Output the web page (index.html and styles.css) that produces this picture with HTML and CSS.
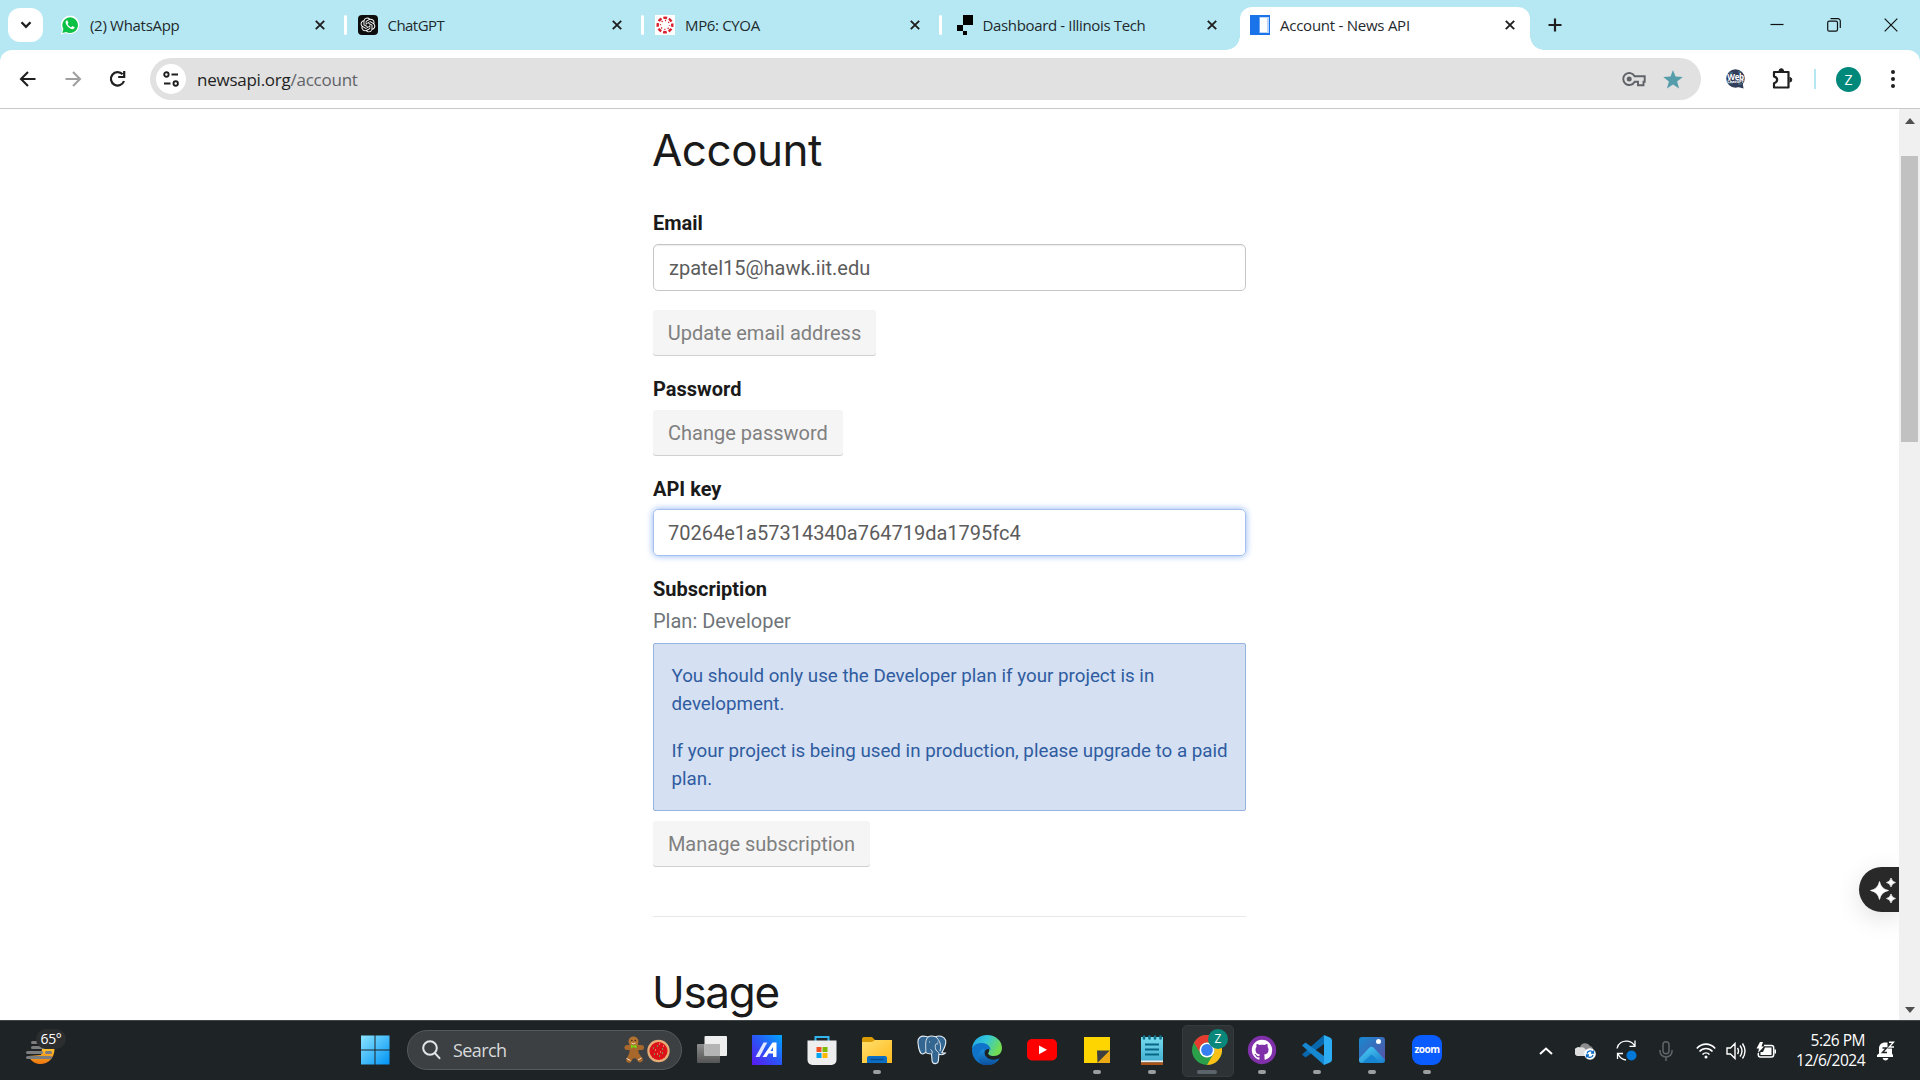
FILE: index.html
```
<!DOCTYPE html>
<html lang="en">
<head>
<meta charset="utf-8">
<title>Account - News API</title>
<link rel="stylesheet" href="styles.css">
</head>
<body>
<div class="screen">
  <header class="tabstrip">
    <button class="tab-search" aria-label="Search tabs"><svg width="12" height="8" viewBox="0 0 12 8"><path d="M1.5 1.2 6 5.8l4.5-4.6" fill="none" stroke="#1f1f1f" stroke-width="2.3"/></svg></button>
    <div class="tabs">
      <div class="tab">
        <svg class="fav" viewBox="0 0 20 20"><path d="M.8 19.4 2.2 14.6A9.2 9.2 0 1 1 5.8 18Z" fill="#fff"/><path d="m2.3 17.9 1.1-3.8a7.8 7.8 0 1 1 2.8 2.8Z" fill="#0cc143"/><path d="M7.2 5.3c-.5-.1-1.7.7-1.6 2.200.2 2.400 3.600 6.400 6.800 6.700 1.500 0 2.300-1 2.200-1.900l-2.300-1.200-1.100 1.200C9.500 11.700 8.200 10.300 7.600 9l.8-1.200Z" fill="#fff"/></svg>
        <span class="tab-title t1">(2) WhatsApp</span><svg class="x" viewBox="0 0 10 10"><path d="m.8.8 8.400 8.400M9.200.8.8 9.200"/></svg>
      </div>
      <div class="tab">
        <svg class="fav" viewBox="0 0 20 20"><rect width="20" height="20" rx="4" fill="#0d0d0d"/><g transform="translate(2.600 2.600) scale(.615)"><path fill="#fff" d="M22.2819 9.8211a5.9847 5.9847 0 0 0-.5157-4.9108 6.0462 6.0462 0 0 0-6.5098-2.9A6.0651 6.0651 0 0 0 4.9807 4.1818a5.9847 5.9847 0 0 0-3.9977 2.9 6.0462 6.0462 0 0 0 .7427 7.0966 5.98 5.98 0 0 0 .511 4.9107 6.051 6.051 0 0 0 6.5146 2.9001A5.9847 5.9847 0 0 0 13.2599 24a6.0557 6.0557 0 0 0 5.7718-4.2058 5.9894 5.9894 0 0 0 3.9977-2.9001 6.0557 6.0557 0 0 0-.7475-7.0729zm-9.022 12.6081a4.4755 4.4755 0 0 1-2.8764-1.0408l.1419-.0804 4.7783-2.7582a.7948.7948 0 0 0 .3927-.6813v-6.7369l2.02 1.1686a.071.071 0 0 1 .038.052v5.5826a4.504 4.504 0 0 1-4.4945 4.4944zm-9.6607-4.1254a4.4708 4.4708 0 0 1-.5346-3.0137l.142.0852 4.783 2.7582a.7712.7712 0 0 0 .7806 0l5.8428-3.3685v2.3324a.0804.0804 0 0 1-.0332.0615L9.74 19.9502a4.4992 4.4992 0 0 1-6.1408-1.6464zM2.3408 7.8956a4.485 4.485 0 0 1 2.3655-1.9728V11.6a.7664.7664 0 0 0 .3879.6765l5.8144 3.3543-2.0201 1.1685a.0757.0757 0 0 1-.071 0l-4.8303-2.7865A4.504 4.504 0 0 1 2.3408 7.872zm16.5963 3.8558L13.1038 8.364 15.1192 7.2a.0757.0757 0 0 1 .071 0l4.8303 2.7913a4.4944 4.4944 0 0 1-.6765 8.1042v-5.6772a.79.79 0 0 0-.407-.667zm2.0107-3.0231l-.142-.0852-4.7735-2.7818a.7759.7759 0 0 0-.7854 0L9.409 9.2297V6.8974a.0662.0662 0 0 1 .0284-.0615l4.8303-2.7866a4.4992 4.4992 0 0 1 6.6802 4.66zM8.3065 12.863l-2.02-1.1638a.0804.0804 0 0 1-.038-.0567V6.0742a4.4992 4.4992 0 0 1 7.3757-3.4537l-.142.0805L8.704 5.459a.7948.7948 0 0 0-.3927.6813zm1.0976-2.3654l2.602-1.4998 2.6069 1.4998v2.9994l-2.5974 1.4997-2.6067-1.4997Z"/></g></svg>
        <span class="tab-title t2">ChatGPT</span><svg class="x" viewBox="0 0 10 10"><path d="m.8.8 8.400 8.400M9.200.8.8 9.200"/></svg>
      </div>
      <div class="tab">
        <svg class="fav" viewBox="0 0 20 20"><rect width="20" height="20" fill="#fff"/><circle cx="10" cy="10" r="7.300" fill="none" stroke="#d92231" stroke-width="2.500" stroke-dasharray="3.800 1.933" stroke-dashoffset="1.900"/><circle cx="10" cy="10" r="4.500" fill="none" stroke="#d92231" stroke-width="1.300" stroke-dasharray="1.200 2.334" stroke-dashoffset=".6"/></svg>
        <span class="tab-title t3">MP6: CYOA</span><svg class="x" viewBox="0 0 10 10"><path d="m.8.8 8.400 8.400M9.200.8.8 9.200"/></svg>
      </div>
      <div class="tab last">
        <svg class="fav" viewBox="0 0 20 20"><path d="M10 0h10v10H10zM4 10h6v6H4zM10 16h4v4h-4z"/></svg>
        <span class="tab-title t4">Dashboard - Illinois Tech</span><svg class="x" viewBox="0 0 10 10"><path d="m.8.8 8.400 8.400M9.200.8.8 9.200"/></svg>
      </div>
      <div class="tab active">
        <svg class="fav" viewBox="0 0 20 20"><path d="M0 0h20v20H0z" fill="#1a73e8"/><path d="M9.500 2H19v16H9.500z" fill="#bcd6fa"/><path d="M10 3h7v14h-7z" fill="#fff"/></svg>
        <span class="tab-title t5">Account - News API</span><svg class="x" viewBox="0 0 10 10"><path d="m.8.8 8.400 8.400M9.200.8.8 9.200"/></svg>
      </div>
    </div>
    <svg class="newtab" width="14" height="14" viewBox="0 0 14 14"><path d="M7 .5v13M.5 7h13" stroke="#1f1f1f" stroke-width="2.200"/></svg>
    <div class="winctl">
      <svg width="14" height="14" viewBox="0 0 14 14"><path d="M.5 6.500h13" /></svg>
      <svg width="14" height="14" viewBox="0 0 14 14"><rect x=".7" y="3.200" width="9.800" height="10" rx="1.600"/><path d="M3.500.7H10.800a2.500 2.500 0 0 1 2.500 2.500V10"/></svg>
      <svg width="14" height="14" viewBox="0 0 14 14"><path d="m.7.7 12.600 12.600M13.300.7.7 13.300"/></svg>
    </div>
  </header>

  <nav class="toolbar">
    <svg class="nav" viewBox="0 0 18 18"><path d="M16.500 9H2M9 2 2 9l7 7" fill="none" stroke="#1f1f1f" stroke-width="2.100"/></svg>
    <svg class="nav" viewBox="0 0 18 18"><path d="M1.500 9H16M9 2l7 7-7 7" fill="none" stroke="#a0a0a0" stroke-width="2.100"/></svg>
    <svg class="nav" viewBox="0 0 18 18"><path d="M13.600 4.300A6.700 6.700 0 1 0 15 11M15.200 1v6h-6" fill="none" stroke="#1f1f1f" stroke-width="2.200"/></svg>
    <div class="omnibox">
      <span class="site"><svg width="16" height="16" viewBox="0 0 16 16" fill="none" stroke="#1f1f1f" stroke-width="1.900"><circle cx="3.400" cy="3.500" r="2.200"/><path d="M8.500 3.500H15M1 12.500h6.500"/><circle cx="12.700" cy="12.500" r="2.200"/></svg></span>
      <span class="url"><b>newsapi.org</b>/account</span>
      <svg class="key" width="24" height="16" viewBox="0 0 24 16"><path d="M12.600 5.300A6 6 0 1 0 12.600 10.700H16V14.200H21.500V10.700H22.700V5.300Z" fill="none" stroke="#5f6368" stroke-width="1.900"/><circle cx="7.200" cy="8" r="2.500" fill="#5f6368"/></svg>
      <svg class="star" width="20" height="19" viewBox="0 0 20 19"><path d="m10 0 2.500 6.600 7.300.4-5.700 4.500 2 7L10 14.600l-6.100 3.900 2-7L.2 7l7.300-.4Z" fill="#569dac"/></svg>
    </div>
    <span class="ext"><svg width="19" height="20" viewBox="0 0 19 20"><circle cx="9.500" cy="9.500" r="9.300" fill="#323d59"/><path d="m12 18 5.500 1.500-.7-5Z" fill="#323d59"/><path d="M3 4h4M12 3h3M2 14h5M12 15h4" stroke="#4b8396"/></svg><i>Web</i><u>ChatGPT</u></span>
    <svg class="puzzle" width="22" height="22" viewBox="0 0 22 22"><path d="M3 4H17.500V19.500H3V15.200C7.200 14 7.200 9.600 3 8.400Z" fill="none" stroke="#1f1f1f" stroke-width="2.200" stroke-linejoin="round"/><path d="M8 3a2.300 2.300 0 0 1 4.600 0M18.500 9.500a2.300 2.300 0 0 1 0 4.600" fill="#1f1f1f" stroke="#1f1f1f"/></svg>
    <span class="divider"></span>
    <span class="avatar">Z</span>
    <svg class="dots" width="4" height="18" viewBox="0 0 4 18" fill="#1f1f1f"><circle cx="2" cy="2" r="2"/><circle cx="2" cy="9" r="2"/><circle cx="2" cy="16" r="2"/></svg>
  </nav>

  <div class="viewport">
    <main class="page">
      <h1 class="h-account">Account</h1>
      <form class="form">
        <label class="label">Email</label>
        <div class="input">zpatel15@hawk.iit.edu</div>
        <button type="button" class="btn b1">Update email address</button>
        <label class="label l2">Password</label>
        <button type="button" class="btn b2">Change password</button>
        <label class="label l3">API key</label>
        <div class="input focus">70264e1a57314340a764719da1795fc4</div>
        <label class="label l3">Subscription</label>
        <p class="plan">Plan: Developer</p>
        <div class="alert">
          <p>You should only use the Developer plan if your project is in development.</p>
          <p>If your project is being used in production, please upgrade to a paid plan.</p>
        </div>
        <button type="button" class="btn b3">Manage subscription</button>
      </form>
      <hr>
      <h1 class="h-usage">Usage</h1>
    </main>
    <div class="scrollbar">
      <svg width="10" height="6" viewBox="0 0 10 6"><path d="M0 6 5 0l5 6Z" fill="#505050"/></svg>
      <span class="thumb"></span>
      <svg width="10" height="6" viewBox="0 0 10 6"><path d="m0 0 5 6 5-6Z" fill="#505050"/></svg>
    </div>
    <div class="assist"><svg width="26" height="26" viewBox="0 0 26 26" fill="#fff"><path d="M9.500 4.500Q11 12 18.500 13.500 11 15 9.500 22.500 8 15 .5 13.500 8 12 9.500 4.500ZM21 1q.8 3.700 4.500 4.500Q21.800 6.300 21 10q-.8-3.700-4.500-4.500Q20.200 4.700 21 1ZM21 17q.8 3.700 4.500 4.500-3.700.8-4.500 4.500-.8-3.700-4.500-4.500 3.700-.8 4.500-4.500Z" stroke="#fff" stroke-width=".7"/></svg></div>
  </div>

  <footer class="taskbar">
    <div class="weather">
      <svg width="30" height="27" viewBox="0 0 30 27"><defs><linearGradient id="sun" x2="0" y2="1"><stop stop-color="#fdc02e"/><stop offset="1" stop-color="#f0760f"/></linearGradient></defs><path d="M2.500 18C5 23.500 9.500 26 14.500 26 22 26 28.500 20 28.500 11H16l-1 6Z" fill="url(#sun)"/><path d="M6.500 4.500h4M6.500 9.500h11M1.500 14.500h14M20.500 14.500h4M1.500 19.500h23" stroke="#7c7d7e" stroke-width="3" stroke-linecap="round"/></svg>
      <span>65°</span>
    </div>
    <div class="start"><svg width="30" height="30" viewBox="0 0 30 30"><defs><linearGradient id="win" x2="1" y2="1"><stop stop-color="#8be4ff"/><stop offset="1" stop-color="#0093f5"/></linearGradient></defs><path d="M1 .5h13.500v14H1zM15.500.5H29.500v14H15.500zM1 15.500h13.500v14H1zM15.500 15.500H29.500v14H15.500z" fill="url(#win)"/></svg></div>
    <div class="search">
      <svg width="19" height="20" viewBox="0 0 19 20" fill="none" stroke="#e4e5e6" stroke-width="2"><circle cx="8" cy="8" r="6.800"/><path d="m12.800 13 4.700 5.200" stroke-linecap="round"/></svg>
      <span>Search</span>
      <svg class="treat" width="47" height="28" viewBox="0 0 47 28"><g stroke="#a8682c" stroke-linecap="round"><path d="M10 10v8" stroke-width="9"/><path d="M3 11.500h14.500" stroke-width="5"/><path d="m8 18-3 6M12 18l4 5.500" stroke-width="5.500"/></g><circle cx="9.500" cy="5.500" r="5" fill="#b3722f"/><path d="M7.500 7q2 1.500 4 0M2.500 22.500l4 2M14 24l3.500-2" stroke="#f2dfc5" fill="none"/><path d="m7 8.500 2.500 1.400L12.500 8.500v4L9.500 11 7 12.500Z" fill="#73d813"/><path d="M7.800 4.500h.1M11.200 4.500h.1" stroke="#402612" stroke-width="1.400" stroke-linecap="round"/><circle cx="34.500" cy="15" r="11.200" fill="#e7ac78"/><circle cx="34.500" cy="15" r="9" fill="#dd1118"/><path d="M29 12h1M33 10h1M38 13h1M30 18h1M35 20h1M38 17h1" stroke="#62b45a" stroke-width="1.500"/><path d="M35 8h1M31 14h1M36 16h1M33 18h1M39 10h1" stroke="#ffd2b0"/></svg>
    </div>
    <div class="apps">
      <div class="app"><svg viewBox="0 0 30 30"><defs><linearGradient id="tv" x2="0" y2="1"><stop stop-color="#8d8d8d"/><stop offset="1" stop-color="#555"/></linearGradient></defs><rect y="9" width="23" height="19" rx="1" fill="url(#tv)"/><rect x="7.500" y="1" width="22.500" height="20" rx="1" fill="#eee"/><path d="M7.500 9H23v12H7.500z" fill="#b4b4b4"/></svg></div>
      <div class="app"><svg viewBox="0 0 30 30"><defs><linearGradient id="aa" x1="1" x2="0" y2="1"><stop stop-color="#00a6ff"/><stop offset=".5" stop-color="#2b55f5"/><stop offset="1" stop-color="#5a18f0"/></linearGradient></defs><path d="M0 0h30v30H0z" fill="url(#aa)"/><path d="M11.500 7.500h3.800L7.500 22H3.500Z" fill="#dfe6ff"/><path d="M20.500 7.500H24.500V22H21V18.500H16.500L14.500 22H10.500ZM21 12l-2.500 4H21Z" fill="#fff" fill-rule="evenodd"/></svg></div>
      <div class="app"><svg viewBox="0 0 30 30"><path d="M8.500 7V2h13v5" fill="none" stroke="#33b5ef" stroke-width="2"/><path d="M.5 5.500h29V25a5 5 0 0 1-5 5h-19a5 5 0 0 1-5-5Z" fill="#eee"/><path fill="#f25022" d="M9.500 12h5v5h-5z"/><path fill="#7fba00" d="M15.500 12h5v5h-5z"/><path fill="#00a4ef" d="M9.500 18h5v5h-5z"/><path fill="#ffb900" d="M15.500 18h5v5h-5z"/></svg></div>
      <div class="app run"><svg viewBox="0 0 30 30"><defs><linearGradient id="fo" x2="1" y2="1"><stop stop-color="#ffe06e"/><stop offset="1" stop-color="#ffb91c"/></linearGradient></defs><path d="M0 4q0-2 2-2h8l3 3v5H0Z" fill="#d99b05"/><path d="M0 7h10l3-2h17v23H0Z" fill="url(#fo)"/><path d="M5 28v-5q0-2 2-2h16q2 0 2 2v5Z" fill="#0a6fc4"/><path d="M8.500 24.500h13" stroke="#084c8d" stroke-width="1.500"/></svg></div>
      <div class="app"><svg viewBox="0 0 30 30"><path d="M9 1.500C4 .2.400 2.500 1 8c.4 4.500 2 11 4.500 11 1.500 0 2-1.300 3.500-1.500 1 1.500 3.500 1 5.500 1.500l.6 7c.3 3.500 6 3.600 6.300-.5l.5-6.200c2.800.8 5.500-.2 6.500-1.200-1.500-.2-3-.1-3.600-.6C27.500 13 29.500 8 28.500 5 27 1.300 22 0 18.500 1.700 15.500.7 13 .7 11 2Z" fill="#336791" stroke="#e5edf3" stroke-width="1.100"/><path d="M11 2C7.500 6 9 11 8.800 17.500M18.500 1.700c4.500 3.300 6 9 4.500 14.500M21 9c-3.500-1.500-3 4-2 6 .8 1.500 2.800 2 3 3.500M15 18.500c.5-2 0-3-1.500-4M12 7h1M20.500 7h1" fill="none" stroke="#e5edf3" stroke-width=".9"/></svg></div>
      <div class="app"><svg viewBox="0 0 30 30"><defs><linearGradient id="eg" x2="1" y2=".4"><stop stop-color="#1d9fe5"/><stop offset=".5" stop-color="#33c8d8"/><stop offset="1" stop-color="#72dc52"/></linearGradient><linearGradient id="eb" x2="0" y2="1"><stop stop-color="#1c90dd"/><stop offset="1" stop-color="#0b4f9e"/></linearGradient></defs><path d="M0 14C.5 5.500 7 0 15 0c9 0 15 6 15 13 0 5-3.500 8-8 8-4 0-6.500-1.500-5.500-3.500C19 14 16 10.500 11 10.500 6 8.500 1.500 11 0 14Z" fill="url(#eg)"/><path d="M0 14C1.500 9.500 6 7.500 10.500 8c4.500.4 8 3 8 7C16 13 12.500 14.500 12.500 18.500c0 5 6.500 9 15 5C24.500 28 20.500 30 15 30 6 30-.5 23 0 14Z" fill="#0f73c9"/><path d="M10.500 29.500C4 26 4.500 16.500 12.500 14c-2 7 4.500 13.500 15 9.500C23.500 29.500 17 31 10.500 29.500Z" fill="url(#eb)"/></svg></div>
      <div class="app"><svg viewBox="0 0 30 30"><rect y="4" width="30" height="21.500" rx="5" fill="#f00"/><path d="m12 10.500 8 4.300-8 4.400Z" fill="#fff"/></svg></div>
      <div class="app run"><svg viewBox="0 0 30 30"><path d="M2 2h26v26H2z" fill="#fed500"/><path d="M15 15.500h13L15.500 28Z" fill="#3f3f3f"/><path d="M28 15.500V28H15.500Z" fill="#eba915"/></svg></div>
      <div class="app run"><svg viewBox="0 0 30 30"><defs><linearGradient id="np" x2="0" y2="1"><stop stop-color="#76dbee"/><stop offset="1" stop-color="#42aed0"/></linearGradient></defs><path d="M4 2h22v25H4z" fill="url(#np)"/><path d="M4 25.500h22v2H4z" fill="#eee"/><path d="M4 27.500h22V30H4z" fill="#aa5517"/><path d="M8 9.500h14M8 14.500h14M8 19.500h14" stroke="#0a6685" stroke-width="2"/><path d="M7 1.500v2M12.500 1.500v2M18 1.500v2M23.500 1.500v2" stroke="#13718c" stroke-width="2.600" stroke-linecap="round"/></svg></div>
      <div class="app current run"><svg viewBox="0 0 30 30"><circle cx="15" cy="15" r="15" fill="#2aa04b"/><path d="M2 7.500A15 15 0 0 1 28 7.500H15A7.500 7.500 0 0 0 8.500 18.700Z" fill="#e63b2e"/><path d="M28 7.500A15 15 0 0 1 15 30l6.500-11.300A7.500 7.500 0 0 0 15 7.500Z" fill="#fbc116"/><circle cx="15" cy="15" r="7.500" fill="#fff"/><circle cx="15" cy="15" r="5.900" fill="#357ff0"/></svg><span class="badge">Z</span></div>
      <div class="app run"><svg viewBox="0 0 30 30"><circle cx="15" cy="15" r="14.200" fill="#8030a8"/><path transform="translate(4.800 4.800) scale(1.275)" fill="#fff" d="M8 0C3.580 0 0 3.580 0 8c0 3.540 2.290 6.530 5.470 7.590.4.07.55-.17.55-.38 0-.19-.01-.82-.01-1.490-2.010.37-2.530-.49-2.690-.94-.09-.23-.48-.94-.82-1.130-.28-.15-.68-.52-.01-.53.63-.01 1.080.58 1.230.82.72 1.210 1.870.87 2.330.66.07-.52.28-.87.51-1.070-1.780-.2-3.640-.89-3.640-3.950 0-.87.31-1.590.82-2.150-.08-.2-.36-1.020.08-2.120 0 0 .67-.21 2.200.82.64-.18 1.320-.27 2-.27.68 0 1.360.09 2 .27 1.530-1.040 2.200-.82 2.200-.82.44 1.100.16 1.920.08 2.120.51.56.82 1.270.82 2.150 0 3.070-1.870 3.750-3.650 3.950.29.25.54.73.54 1.480 0 1.070-.01 1.930-.01 2.200 0 .21.15.46.55.38A8.010 8.010 0 0 0 16 8c0-4.420-3.580-8-8-8z"/></svg></div>
      <div class="app run"><svg viewBox="0 0 30 30"><path d="M22 0v9L3.500 22.500 0 19.500Z" fill="#0868ae"/><path d="M0 10.500 3.500 7.500 22 21v9L0 10.500Z" fill="#1687d0"/><path d="m22 0 6 2.500q2 1 2 3v19q0 2-2 3L22 30Z" fill="#2bacf3"/></svg></div>
      <div class="app run"><svg viewBox="0 0 30 30"><defs><linearGradient id="ph" x2="1" y2="1"><stop stop-color="#1889d0"/><stop offset="1" stop-color="#5c4ea5"/></linearGradient><linearGradient id="mt" x2="1" y2="1"><stop stop-color="#50d5f8"/><stop offset="1" stop-color="#1374c9"/></linearGradient><clipPath id="phc"><rect x="2" y="2" width="26" height="26" rx="3"/></clipPath></defs><g clip-path="url(#phc)"><path d="M2 2h26v26H2z" fill="url(#ph)"/><path d="m0 26 12-13q2.500-2.500 5 0l13 14v3H0Z" fill="url(#mt)"/><path d="m5 28 9.500-8.500L24 28Z" fill="#1685d2"/></g><circle cx="21.500" cy="6.500" r="2.500" fill="#fff"/></svg></div>
      <div class="app run zoomapp"><span>zoom</span></div>
    </div>
    <div class="tray">
      <svg class="c1" width="14" height="8" viewBox="0 0 14 8"><path d="m1 7 6-5.500L13 7" fill="none" stroke="#fff" stroke-width="2"/></svg>
      <svg class="c2" width="21" height="18" viewBox="0 0 21 18"><path d="M5 5a5.500 5.500 0 0 1 10-1 4.500 4.500 0 0 1 3 6H5Z" fill="#8c8c8c"/><path d="M4.500 14a4.500 4.500 0 1 1 1-8.500c2-.8 4.500.2 5.500 3l2 5.500Z" fill="#dedede"/><circle cx="15" cy="12" r="5.800" fill="#fff"/><path d="M12 11.500a3.200 3.200 0 0 1 6-.8M18 12.800a3.200 3.200 0 0 1-6 .8M18.500 8.500v2.500H16M11.500 15.500V13H14" fill="none" stroke="#0b6bc5" stroke-width="1.300"/></svg>
      <svg class="c3" width="21" height="21" viewBox="0 0 21 21"><path d="M1 8.500C2 3 7 .5 11.500 1.200c3 .4 5.500 2 7 4.500M19 .5v5.800h-5.500M1.500 19v-5.500H7M2 14c1.500 3 4 5.500 8 6" fill="none" stroke="#fff" stroke-width="1.300"/><circle cx="15.500" cy="15.500" r="5" fill="#0078d7"/></svg>
      <svg class="c4" width="14" height="20" viewBox="0 0 14 20" fill="none" stroke="#5f6668" stroke-width="1.500"><rect x="4" y=".8" width="6" height="12" rx="3"/><path d="M1 9v1.500a6 5.500 0 0 0 12 0V9M7 16v4"/></svg>
      <svg class="c5" width="20" height="16" viewBox="0 0 20 16" fill="none" stroke="#fff" stroke-width="1.600"><path d="M.8 5.500C6-.3 14-.3 19.200 5.500M3.500 8.500c3.700-4 9.300-4 13 0M6.500 11.500c2-2 5-2 7 0"/><circle cx="10" cy="14" r="1.500" fill="#fff" stroke="none"/></svg>
      <svg class="c6" width="20" height="18" viewBox="0 0 20 18" fill="none" stroke="#fff" stroke-width="1.400"><path d="M1 6h3.500L9 1.500v15L4.500 12H1ZM11.500 6q2 3 0 6M14 3.500q4 5.500 0 11M16.500 1.500q5 7.500 0 15"/></svg>
      <svg class="c7" width="21" height="17" viewBox="0 0 21 17"><path d="M8 3.500h7.500q2.200 0 2.200 2.200v7q0 2.200-2.200 2.200h-11q-2.200 0-2.200-2.200V11" fill="none" stroke="#fff" stroke-width="1.500"/><path d="M9 5.500h6.500V13H4.500V10H7ZM18.500 7.500h1.500v4h-1.500zM4 0 .5 6.500H3L2 11l6-6.500H5.500L7 0Z" fill="#fff"/></svg>
      <div class="clock"><span class="time">5:26 PM</span><span class="date">12/6/2024</span></div>
      <svg class="c8" width="18" height="20" viewBox="0 0 18 20"><path d="M2 12.500V7.500C2 3.500 5 1.500 8 1.500h4l3 6v5l1 1.500v2H0v-2Z" fill="#fff"/><path d="M5.500 17h6Q10.500 19.500 8.500 19.500T5.500 17Z" fill="#fff"/><path d="M5.500 7H9.500L5.500 11.500H10" fill="none" stroke="#202427" stroke-width="1.500"/><path d="M10.500 0H18v7.500H10.500Z" fill="#1e2326"/><path d="M12 1.200h4.500L12.200 6H17" fill="none" stroke="#fff" stroke-width="1.400"/></svg>
    </div>
  </footer>
</div>
</body>
</html>
```
FILE: styles.css
```
* { box-sizing: border-box; }
body { margin: 0; overflow: hidden; background: #fff; }
svg { display: block; flex: none; }
button { font: inherit; border: 0; padding: 0; }
.screen { width: 1920px; height: 1080px; display: flex; flex-direction: column; overflow: hidden; background: linear-gradient(#b5e8f3 70px, #fff 70px); font-family: "Open Sans", "Noto Sans", sans-serif; }

/* tab strip */
.tabstrip { height: 50px; flex: none; display: flex; align-items: center; background: #b5e8f3; padding-left: 8px; }
.tab-search { width: 35px; height: 34px; border-radius: 12px; background: #fff; display: flex; align-items: center; justify-content: center; }
.tabs { display: flex; align-self: stretch; margin-left: 5px; }
.tab { width: 297.5px; display: flex; align-items: center; padding: 0 21px 0 12px; position: relative; }
.tab::after { content: ""; position: absolute; right: -1px; top: 15px; width: 3px; height: 20px; border-radius: 2px; background: #fff; }
.tab.last::after { display: none; }
.fav { width: 20px; height: 20px; }
.tab-title { font-size: 15px; line-height: 20px; color: #1f2a2d; margin-left: 10px; flex: 1; white-space: nowrap; letter-spacing: -.35px; }
.t1 { letter-spacing: -.3px; }
.t2 { letter-spacing: -.55px; }
.t5 { letter-spacing: -.25px; }
.x { width: 10px; height: 10px; stroke: #1f1f1f; stroke-width: 1.9; }
.tab.active { width: 290px; margin: 7px 0 0 2px; padding: 0 15px 7px 10px; background: #fff; border-radius: 12px 12px 0 0; }
.tab.active::before, .tab.active::after { content: ""; position: absolute; top: auto; bottom: 0; width: 14px; height: 14px; border-radius: 0; }
.tab.active::before { left: -14px; background: radial-gradient(circle at 0 0, transparent 13.5px, #fff 14px); }
.tab.active::after { right: -14px; background: radial-gradient(circle at 100% 0, transparent 13.5px, #fff 14px); }
.newtab { margin-left: 18px; }
.winctl { margin-left: auto; display: flex; gap: 43px; padding-right: 22px; fill: none; stroke: #111; stroke-width: 1.2; }

/* toolbar */
.toolbar { height: 59px; flex: none; display: flex; align-items: center; background: #fff; border-bottom: 1px solid #c8c8c8; padding: 0 25px 0 19px; border-radius: 12px 12px 0 0; }
.nav { width: 18px; height: 18px; margin-right: 27px; }
.omnibox { width: 1552px; height: 42px; margin-left: -4px; border-radius: 21px; background: #e1e1e1; display: flex; align-items: center; padding: 0 18px 0 6px; }
.site { width: 30px; height: 30px; border-radius: 50%; background: #fff; display: flex; align-items: center; justify-content: center; }
.url { margin: 1px 0 0 11px; font-size: 17px; line-height: 24px; color: #5f6368; letter-spacing: -.25px; flex: 1; }
.url b { font-weight: 400; color: #1f1f1f; }
.key { margin-right: 17px; }
.ext { margin-left: 25px; position: relative; color: #fff; }
.ext i, .ext u { position: absolute; left: 0; width: 19px; text-align: center; font: bold 8px/8px "Open Sans", sans-serif; top: 4px; letter-spacing: -.4px; text-decoration: none; }
.ext u { top: 11px; font-size: 4px; line-height: 4px; left: 0; letter-spacing: -.1px; }
.puzzle { margin-left: 26px; }
.divider { width: 2px; height: 20px; background: #b5e8f3; margin: 0 20px 0 21px; }
.avatar { width: 25px; height: 25px; border-radius: 50%; background: #00897b; color: #fff; font-size: 14px; line-height: 25px; text-align: center; }
.dots { margin-left: 30px; }

/* page */
.viewport { height: 911px; flex: none; display: flex; background: #fff; position: relative; overflow: hidden; font-family: Roboto, sans-serif; }
.page { width: 593px; margin-left: 653px; flex: none; color: #1a1a1a; }
h1 { margin: 0 0 0 -1px; font-family: Inter, "Open Sans", sans-serif; font-weight: 400; font-size: 44px; line-height: 54px; white-space: nowrap; }
.h-account { padding-top: 14px; letter-spacing: -.5px; }
.h-usage { margin-top: 48px; letter-spacing: -1.3px; }
.form { display: flex; flex-direction: column; align-items: flex-start; margin-top: 31px; }
.label { font-size: 20px; line-height: 30px; font-weight: 700; }
.l2 { margin-top: 18px; }
.l3 { margin-top: 18px; }
.input { width: 593px; height: 47px; margin-top: 6px; border: 1px solid #c6c6c6; border-radius: 5px; box-shadow: inset 0 1px 1px rgba(0,0,0,.075); padding: 0 15px; font-size: 20px; line-height: 46px; color: #5c5c5c; }
.input.focus { margin-top: 5px; padding-left: 14px; border-color: #a3c0f0; box-shadow: 0 0 7px #8db2f2; }
.btn { height: 46px; border-radius: 3px; background: #f5f5f5; color: #808080; font-size: 20px; line-height: 46px; text-align: center; box-shadow: inset 0 -1px 0 #d0d0d0; white-space: nowrap; }
.b1 { width: 223px; margin-top: 19px; }
.b2 { width: 190px; margin-top: 6px; }
.b3 { width: 217px; margin-top: 10px; }
.plan { margin: 2px 0 0; font-size: 20px; line-height: 30px; color: #6f7479; }
.alert { width: 593px; height: 168px; margin-top: 7px; border: 1px solid #95b3e3; border-radius: 2px; background: #d5e0f2; padding: 18px 16px 18px 17.5px; font-size: 18.75px; line-height: 28px; color: #2f5ca0; }
.alert p { margin: 0 0 19px; }
hr { border: 0; height: 1px; background: #e8e8e8; margin: 49px 0 0; }
.scrollbar { margin-left: auto; width: 21px; background: #f0f0f0; display: flex; flex-direction: column; align-items: center; padding: 9px 0 7px; }
.thumb { width: 17px; height: 286px; margin: 32px 0 auto; background: #c1c1c1; }
.assist { position: absolute; left: 1859px; top: 758px; width: 40px; height: 45px; border-radius: 23px 0 0 23px; background: #292929; padding: 10px 0 0 11px; box-shadow: 0 6px 24px rgba(0,0,0,.12); clip-path: inset(-60px 0 -60px -60px); }

/* taskbar */
.taskbar { height: 60px; flex: none; display: flex; align-items: stretch; background: #1e2326; border-top: 1px solid #414748; color: #fff; position: relative; }
.weather { width: 356px; position: relative; padding: 17px 0 0 26px; }
.weather span { position: absolute; left: 36px; top: 8px; width: 30px; height: 20px; border-radius: 10px; background: #2c2d2e; font-size: 14px; line-height: 20px; text-align: center; letter-spacing: -.3px; }
.start { width: 51px; padding: 14px 0 0 4px; }
.search { width: 275px; height: 40px; margin-top: 9px; border-radius: 20px; background: #3c4043; border: 1px solid #555a5c; display: flex; align-items: center; padding: 0 10px 0 14px; }
.search span { margin-left: 12px; font-size: 18px; line-height: 24px; color: #d8d9da; flex: 1; letter-spacing: -.6px; }
.apps { display: flex; margin-left: 2.5px; }
.app { width: 55px; display: flex; justify-content: center; padding-top: 14px; position: relative; }
.app svg { width: 30px; height: 30px; z-index: 1; }
.app.run::after { content: ""; position: absolute; left: 23.5px; top: 49px; width: 8px; height: 4px; border-radius: 2px; background: #9b9d9e; }
.app.current::before { content: ""; position: absolute; left: 2px; top: 4px; width: 50px; height: 50px; border-radius: 5px; background: #2d3235; border: 1px solid #363b3e; }
.app.current.run::after { left: 17.5px; width: 20px; background: #5c646b; }
.badge { position: absolute; z-index: 2; left: 28.5px; top: 8px; width: 20px; height: 20px; border-radius: 50%; background: #08877a; font-size: 12px; line-height: 20px; text-align: center; }
.zoomapp span { width: 30px; height: 30px; border-radius: 9px; background: #0b5cff; font: bold 10px/28px "Open Sans", sans-serif; text-align: center; letter-spacing: -.5px; }
.tray { margin-left: auto; display: flex; align-items: center; padding-right: 25px; }
.c2 { margin-left: 22px; }
.c3 { margin-left: 20px; }
.c4 { margin-left: 22px; }
.c5 { margin-left: 23px; }
.c6 { margin-left: 10px; }
.c7 { margin-left: 10px; }
.clock { width: 68px; margin: 0 12px 2px 20px; display: flex; flex-direction: column; align-items: flex-end; font-size: 15.5px; line-height: 20px; white-space: nowrap; letter-spacing: -.5px; }
```
